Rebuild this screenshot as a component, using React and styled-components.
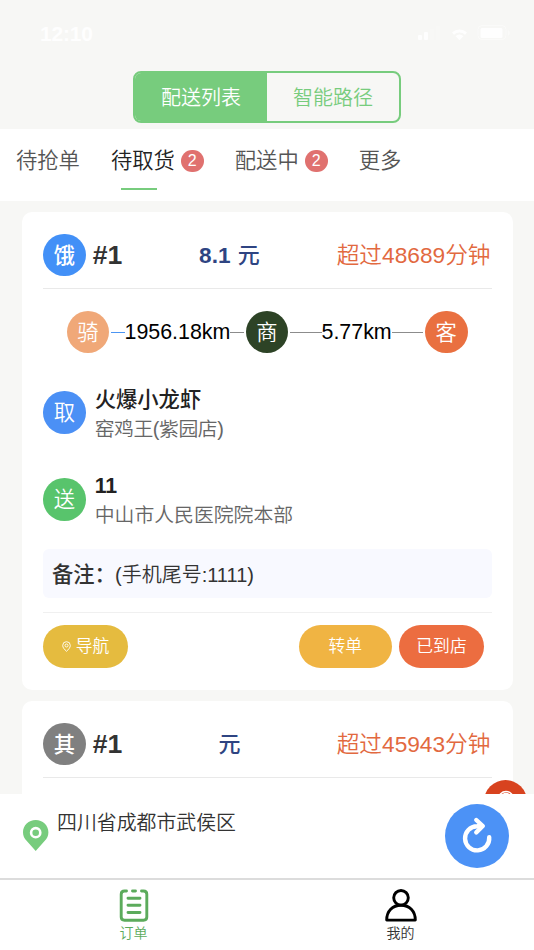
import { useState } from "react";
import styled, { createGlobalStyle } from "styled-components";

const GlobalStyle = createGlobalStyle`
  * {
    box-sizing: border-box;
  }
  body {
    margin: 0;
    background-color: #f7f7f5;
    font-family: "Liberation Sans", "Noto Sans CJK SC", sans-serif;
  }
  button {
    font-family: inherit;
    font-weight: inherit;
    border: none;
    padding: 0;
    background: none;
    cursor: pointer;
  }
`;

const Page = styled.div`
  display: flex;
  flex-direction: column;
  width: 534px;
  height: 950px;
  overflow: hidden;
  font-weight: 350;
  color: #333;
`;

const StatusBar = styled.div`
  display: flex;
  align-items: center;
  justify-content: space-between;
  height: 71px;
  padding: 0 21px 4px 40px;
  color: #fefefe;
`;

const Clock = styled.span`
  font-size: 21px;
  line-height: 24px;
  letter-spacing: -0.2px;
  font-weight: 700;
`;

const SegmentWrap = styled.div`
  display: flex;
  justify-content: center;
  height: 58px;
  flex-shrink: 0;
`;

const Segment = styled.div`
  display: flex;
  width: 268px;
  height: 52px;
  border: 2px solid #77cc7d;
  border-radius: 8px;
  overflow: hidden;
`;

const SegmentButton = styled.button`
  flex: 1;
  padding-top: 1px;
  font-size: 20px;
  line-height: 48px;
  color: ${({ $active }) => ($active ? "#fff" : "#77cc7d")};
  background-color: ${({ $active }) => ($active ? "#77cc7d" : "transparent")};
`;

const TabList = styled.nav`
  display: flex;
  gap: 31px;
  height: 72px;
  flex-shrink: 0;
  padding: 16px 16px 0;
  background-color: #fff;
`;

const Tab = styled.button`
  display: flex;
  flex-direction: column;
  align-items: flex-start;
  height: 46px;
  font-size: 21.3px;
  line-height: 32px;
  color: ${({ $active }) => ($active ? "#222" : "#555")};
`;

const TabLabel = styled.span`
  display: flex;
  align-items: center;
  gap: 6px;
  height: 32px;
`;

const TabLine = styled.span`
  width: 36px;
  height: 2px;
  margin: 11px 0 0 10px;
  background-color: #77cc7d;
`;

const Badge = styled.span`
  width: 23px;
  height: 22px;
  border-radius: 11px;
  background-color: #e0716f;
  color: #fff;
  font-size: 16px;
  line-height: 22px;
  text-align: center;
`;

const List = styled.main`
  position: relative;
  flex: 1;
  min-height: 0;
  overflow: hidden;
  padding: 11px 21.5px 0 22px;
`;

const Card = styled.section`
  height: ${({ $height }) => $height}px;
  margin-bottom: 11px;
  padding: 10px 21px 0;
  border-radius: 10px;
  background-color: #fff;
`;

const CardHeader = styled.header`
  display: flex;
  align-items: center;
  justify-content: space-between;
  height: 67px;
  padding-right: 1px;
  border-bottom: 1px solid #e9e9e9;
`;

const Serial = styled.div`
  display: flex;
  align-items: center;
  gap: 7px;
  font-size: 26.6px;
  font-weight: 700;
`;

const Circle = styled.span`
  flex-shrink: 0;
  width: 42.7px;
  height: 42.7px;
  border-radius: 50%;
  background-color: ${({ $color }) => $color};
  color: #fff;
  font-size: 21.3px;
  font-weight: ${({ $bold }) => ($bold ? 500 : 350)};
  line-height: 44px;
  text-align: center;
`;

const Price = styled.span`
  padding-top: 1px;
  font-size: 22px;
  line-height: 32px;
  font-weight: 700;
  word-spacing: 1px;
  color: #2e4482;
`;

const Amount = styled.span`
  font-size: 22.6px;
`;

const PriceUnit = styled.span`
  font-weight: 500;
`;

const Overtime = styled.span`
  font-size: 22.7px;
  line-height: 32px;
  color: #e2693f;
`;

const Route = styled.div`
  display: flex;
  align-items: center;
  height: 43px;
  margin: 21.5px 24px 0 23.5px;
  font-size: 21.4px;
  color: #000;
`;

const RouteLeg = styled.div`
  display: flex;
  flex: 1;
  align-items: center;
  padding: 0 1.5px;
`;

const RouteLine = styled.span`
  flex: 1;
  height: 1px;
  background-color: ${({ $blue }) => ($blue ? "#4b95f3" : "#8c8c8c")};
`;

const Address = styled.div`
  display: flex;
  align-items: center;
  gap: 9px;
  height: 60px;
  margin-top: ${({ $top }) => $top}px;
`;

const AddressText = styled.div`
  padding-top: ${({ $top }) => $top}px;
`;

const AddressName = styled.div`
  font-size: 21.3px;
  line-height: 30px;
  font-weight: ${({ $latin }) => ($latin ? 700 : 500)};
  color: #222;
`;

const AddressDetail = styled.div`
  font-size: 19.85px;
  line-height: 29px;
  letter-spacing: ${({ $tight }) => ($tight ? "-0.45px" : "0")};
  color: #666;
`;

const Remark = styled.div`
  display: flex;
  height: 49px;
  margin-top: 19px;
  padding: 1px 0 0 9px;
  border-radius: 6px;
  background-color: #f8f9ff;
  font-size: 20px;
  line-height: 50px;
`;

const RemarkTitle = styled.b`
  width: 63px;
  font-size: 21.3px;
  font-weight: 500;
  white-space: nowrap;
`;

const Actions = styled.div`
  display: flex;
  gap: 7.5px;
  margin-top: 14px;
  padding: 12px 7.5px 0 0;
  border-top: 1px solid #f0f0f0;
`;

const ActionButton = styled.button`
  display: flex;
  align-items: center;
  justify-content: center;
  gap: 5px;
  width: ${({ $width }) => $width}px;
  height: 43px;
  margin-right: ${({ $first }) => ($first ? "auto" : "0")};
  border-radius: 22px;
  background-color: ${({ $color }) => $color};
  color: #fff;
  font-size: 16.8px;
  line-height: 43px;
`;

// リスト右下の連絡ボタン
const ServiceButton = styled.button`
  position: absolute;
  right: 7px;
  bottom: -29px;
  display: flex;
  justify-content: center;
  width: 43px;
  height: 43px;
  padding-top: 10px;
  border-radius: 50%;
  background-color: #d8431f;
`;

const LocationBar = styled.div`
  display: flex;
  height: 84px;
  flex-shrink: 0;
  padding: 10px 25px 0 23px;
  background-color: #fff;
`;

const PinWrap = styled.span`
  width: 34px;
  padding-top: 16px;
`;

const LocationText = styled.span`
  flex: 1;
  padding-top: 4px;
  font-size: 19.9px;
  line-height: 30px;
`;

const RefreshButton = styled.button`
  display: flex;
  align-items: center;
  justify-content: center;
  width: 64px;
  height: 64px;
  border-radius: 50%;
  background-color: #4c92f6;
`;

const BottomNav = styled.nav`
  display: flex;
  height: 72px;
  flex-shrink: 0;
  border-top: 2px solid #dcdcdc;
  background-color: #fff;
`;

const NavItem = styled.button`
  display: flex;
  flex: 1;
  flex-direction: column;
  align-items: center;
  gap: 1px;
  padding-top: 9px;
  font-size: 14px;
  line-height: 20px;
  color: ${({ $active }) => ($active ? "#5cab5c" : "#333")};
`;

const StatusIcons = () => (
  <svg width="96" height="20" viewBox="0 0 96 20" fill="#fefefe">
    <rect x="1" y="11" width="4" height="5" rx="1" />
    <rect x="7" y="8" width="4" height="8" rx="1" />
    <g opacity="0.2">
      <rect x="13" y="5" width="4" height="11" rx="1" />
      <rect x="19" y="2" width="4" height="14" rx="1" />
    </g>
    <path d="M35 8.5a11 11 0 0 1 15 0l-2 2.2a8 8 0 0 0-11 0zM38.5 12a6 6 0 0 1 8 0l-4 4.2z" />
    <rect x="61" y="1.5" width="28" height="14" rx="4" fill="none" stroke="#fefefe" opacity="0.4" />
    <rect x="63.5" y="4" width="22" height="10" rx="1.5" />
    <path d="M91 6v6q2-1 2-3t-2-3z" opacity="0.5" />
  </svg>
);

const NavPin = () => (
  <svg width="9" height="11" viewBox="0 0 9 11" fill="none" stroke="#fff">
    <path d="M4.5 10.3C2.5 8.5.7 6.6.7 4.5a3.8 3.8 0 0 1 7.6 0c0 2.1-1.8 4-3.8 5.8z" strokeWidth="0.9" />
    <circle cx="4.5" cy="4.5" r="1.5" strokeWidth="0.9" />
  </svg>
);

const LocationPin = () => (
  <svg width="26" height="32" viewBox="0 0 26 32">
    <path
      d="M12.7 0C5.7 0 0 5.4 0 12.2c0 3.3 1.3 6.2 3.6 8.6L12.7 31l9.1-10.2c2.3-2.4 3.6-5.3 3.6-8.6C25.4 5.4 19.7 0 12.7 0z"
      fill="#77cc7d"
    />
    <circle cx="12.7" cy="12.7" r="4.6" fill="none" stroke="#fff" strokeWidth="2.6" />
  </svg>
);

const RefreshIcon = () => (
  <svg
    width="64"
    height="64"
    viewBox="0 0 64 64"
    fill="none"
    stroke="#fff"
    strokeWidth="4.4"
    strokeLinecap="round"
    strokeLinejoin="round"
  >
    <path d="M44.2 33.2A12.1 12.1 0 1 1 32 22.2L37 22" />
    <path d="M31.3 16L37.8 22L31.3 28.4" />
  </svg>
);

const HeadsetIcon = () => (
  <svg width="18" height="18" viewBox="0 0 18 18" fill="none" stroke="#fff" strokeWidth="1.6">
    <path d="M1.5 9a7.5 7.5 0 0 1 15 0" />
    <circle cx="9" cy="8" r="4.5" />
  </svg>
);

const OrderIcon = () => (
  <svg width="30" height="33" viewBox="0 0 30 33" fill="none" stroke="#5cab5c" strokeWidth="2.9" strokeLinecap="round">
    <path d="M7.5 2H5.5Q2.2 2 2.2 5.2V28Q2.2 31.2 5.5 31.2H24.5Q27.8 31.2 27.8 28V5.2Q27.8 2 24.5 2H22.5" />
    <path d="M13.5 2H16.5M9 9.2H21M9 16.3H21M9 23.5H21" />
  </svg>
);

const UserIcon = () => (
  <svg width="32" height="33" viewBox="0 0 32 33" fill="none" stroke="#000" strokeWidth="2.9" strokeLinejoin="round">
    <circle cx="16" cy="8.8" r="7.3" />
    <path d="M1.7 31.1C1.7 22 7.5 16.3 16 16.3S30.3 22 30.3 31.1Z" />
  </svg>
);

const tabs = [
  { key: "grab", label: "待抢单" },
  { key: "pickup", label: "待取货", count: 2 },
  { key: "delivering", label: "配送中", count: 2 },
  { key: "more", label: "更多" },
];

const OrderHeader = ({ name, color, price, minutes }) => (
  <CardHeader>
    <Serial>
      <Circle $color={color} $bold>
        {name}
      </Circle>
      #1
    </Serial>
    <Price>
      {price && <Amount>{price} </Amount>}
      <PriceUnit>元</PriceUnit>
    </Price>
    <Overtime>超过{minutes}分钟</Overtime>
  </CardHeader>
);

const App = () => {
  const [mode, setMode] = useState("list");
  const [tab, setTab] = useState("pickup");

  return (
    <Page>
      <GlobalStyle />
      <StatusBar>
        <Clock>12:10</Clock>
        <StatusIcons />
      </StatusBar>
      <SegmentWrap>
        <Segment>
          <SegmentButton $active={mode === "list"} onClick={() => setMode("list")}>
            配送列表
          </SegmentButton>
          <SegmentButton $active={mode === "route"} onClick={() => setMode("route")}>
            智能路径
          </SegmentButton>
        </Segment>
      </SegmentWrap>
      <TabList>
        {tabs.map(({ key, label, count }) => (
          <Tab key={key} $active={tab === key} onClick={() => setTab(key)}>
            <TabLabel>
              {label}
              {count && <Badge>{count}</Badge>}
            </TabLabel>
            {tab === key && <TabLine />}
          </Tab>
        ))}
      </TabList>

      <List>
        <Card $height={478}>
          <OrderHeader name="饿" color="#4290f7" price="8.1" minutes="48689" />
          <Route>
            <Circle $color="#f0a878">骑</Circle>
            <RouteLeg>
              <RouteLine $blue />
              1956.18km
              <RouteLine />
            </RouteLeg>
            <Circle $color="#2d4326">商</Circle>
            <RouteLeg>
              <RouteLine />
              5.77km
              <RouteLine />
            </RouteLeg>
            <Circle $color="#e97040">客</Circle>
          </Route>
          <Address $top={29}>
            <Circle $color="#4b90f5">取</Circle>
            <AddressText $top={3}>
              <AddressName>火爆小龙虾</AddressName>
              <AddressDetail $tight>窑鸡王(紫园店)</AddressDetail>
            </AddressText>
          </Address>
          <Address $top={27}>
            <Circle $color="#58c46c">送</Circle>
            <AddressText $top={1}>
              <AddressName $latin>11</AddressName>
              <AddressDetail>中山市人民医院院本部</AddressDetail>
            </AddressText>
          </Address>
          <Remark>
            <RemarkTitle>备注：</RemarkTitle>
            (手机尾号:1111)
          </Remark>
          <Actions>
            <ActionButton $width={85} $color="#e5bb3f" $first>
              <NavPin />
              导航
            </ActionButton>
            <ActionButton $width={92.5} $color="#f0b443">转单</ActionButton>
            <ActionButton $width={85} $color="#ec6d40">已到店</ActionButton>
          </Actions>
        </Card>
        <Card $height={478}>
          <OrderHeader name="其" color="#808080" price="" minutes="45943" />
        </Card>
        <ServiceButton>
          <HeadsetIcon />
        </ServiceButton>
      </List>

      <LocationBar>
        <PinWrap>
          <LocationPin />
        </PinWrap>
        <LocationText>四川省成都市武侯区</LocationText>
        <RefreshButton>
          <RefreshIcon />
        </RefreshButton>
      </LocationBar>
      <BottomNav>
        <NavItem $active>
          <OrderIcon />
          订单
        </NavItem>
        <NavItem>
          <UserIcon />
          我的
        </NavItem>
      </BottomNav>
    </Page>
  );
};

export default App;
